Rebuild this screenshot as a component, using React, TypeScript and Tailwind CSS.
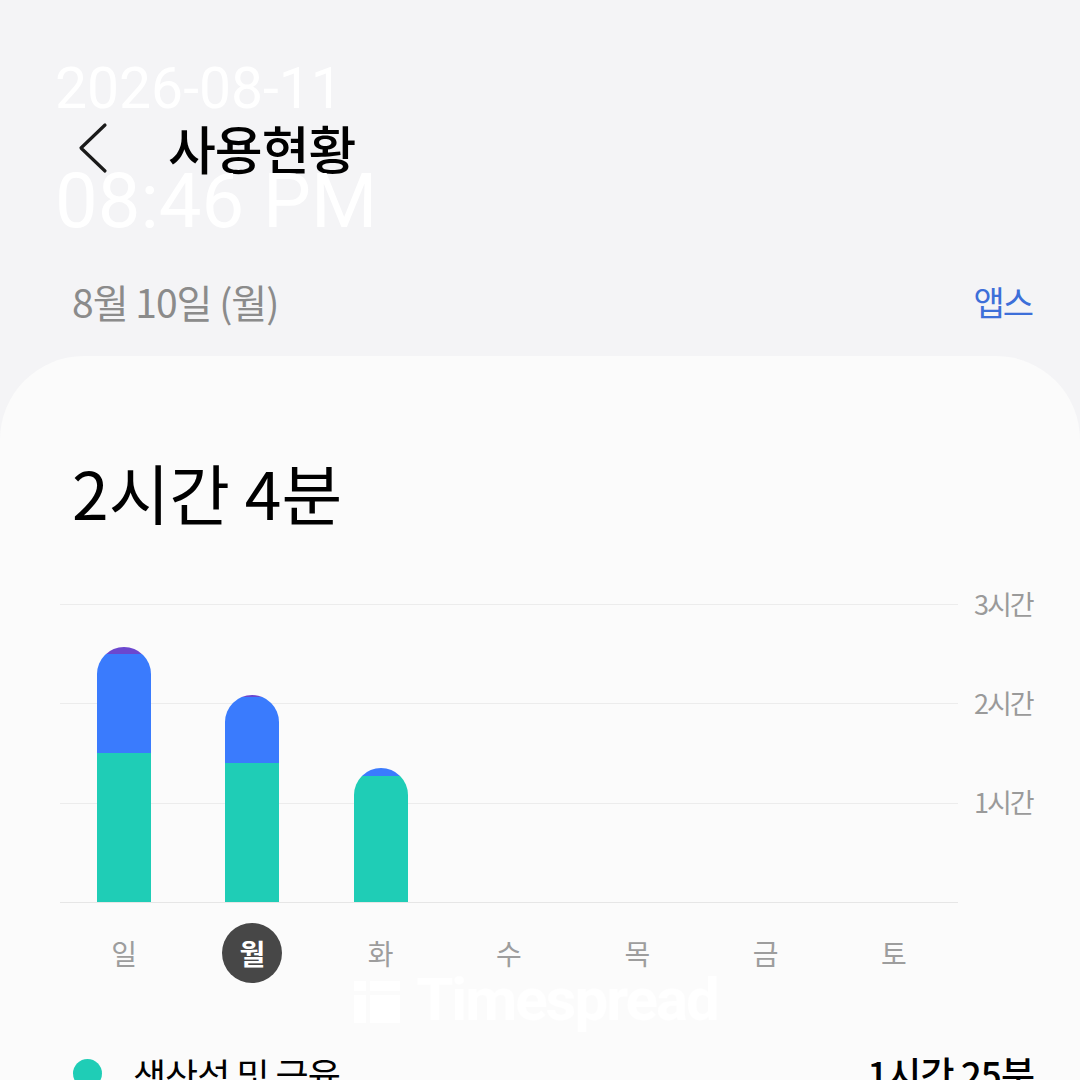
import React from 'react';

const days = ['일', '월', '화', '수', '목', '금', '토'];

// minutes per category for each day (teal, blue, purple)
const usage = [
  { teal: 90, blue: 60, purple: 4 },
  { teal: 84, blue: 40, purple: 1 },
  { teal: 76, blue: 5, purple: 0 },
  null,
  null,
  null,
  null,
];

const PX_PER_MIN = 298 / 180;

const Bar = ({ d }: { d: { teal: number; blue: number; purple: number } }) => (
  <div className="w-[54px] flex flex-col rounded-t-[27px] overflow-hidden">
    <div className="bg-[#6b47cf]" style={{ height: d.purple * PX_PER_MIN }} />
    <div className="bg-[#3a7bfd]" style={{ height: d.blue * PX_PER_MIN }} />
    <div className="bg-[#1fcdb6]" style={{ height: d.teal * PX_PER_MIN }} />
  </div>
);

export default function App() {
  return (
    <div
      className="relative w-[1080px] h-[1080px] overflow-hidden bg-[#f4f4f6] text-black"
      style={{ fontFamily: '"Noto Sans", "Noto Sans CJK KR", sans-serif' }}
    >
      {/* Header */}
      <div className="flex items-center h-[70px] mt-[113px] pl-[78px]">
        <svg width="30" height="52" viewBox="0 0 30 52" fill="none" stroke="#1a1a1a" strokeWidth={3.2} strokeLinecap="round" strokeLinejoin="round">
          <path d="M27 3 L3 26 L27 49" />
        </svg>
        <div className="ml-[60px] text-[52px] font-medium tracking-[-1px] leading-none" style={{ fontFamily: '"Noto Sans CJK KR", sans-serif' }}>
          사용현황
        </div>
      </div>

      {/* Date row */}
      <div className="flex items-center justify-between mt-[95px] pl-[72px] pr-[48px] h-[46px]">
        <span className="text-[39px] text-[#8b8b8b] tracking-[-1px]" style={{ fontFamily: '"Noto Sans CJK KR", sans-serif' }}>
          8월 10일 (월)
        </span>
        <span className="text-[34px] text-[#3d6fd9] tracking-[-2px]" style={{ fontFamily: '"Noto Sans CJK KR", sans-serif' }}>
          앱스
        </span>
      </div>

      {/* Card */}
      <div className="mt-[32px] bg-[#fbfbfb] rounded-t-[84px] h-[800px] pt-[102px]">
        <div className="pl-[72px] text-[66px] leading-none" style={{ fontFamily: '"Noto Sans CJK KR", sans-serif' }}>
          2시간 4분
        </div>

        {/* Chart */}
        <div className="flex mt-[80px] pl-[60px]">
          <div className="relative w-[898px] h-[299px]">
            <div className="absolute inset-0 flex flex-col justify-between">
              <div className="h-px bg-[#ececec]" />
              <div className="h-px bg-[#ececec]" />
              <div className="h-px bg-[#ececec]" />
              <div className="h-px bg-[#e6e6e6]" />
            </div>
            <div className="absolute inset-0 grid grid-cols-7 items-end pb-px">
              {usage.map((d, i) => (
                <div key={i} className="flex justify-center">
                  {d && <Bar d={d} />}
                </div>
              ))}
            </div>
          </div>
          <div className="ml-[16px] flex flex-col justify-between h-[230px] -mt-[16px] text-[27px] text-[#9a9a9a] tracking-[-2px] leading-[32px]" style={{ fontFamily: '"Noto Sans CJK KR", sans-serif' }}>
            <span>3시간</span>
            <span>2시간</span>
            <span>1시간</span>
          </div>
        </div>

        {/* Day labels */}
        <div className="grid grid-cols-7 w-[898px] ml-[60px] mt-[20px] h-[60px] items-center" style={{ fontFamily: '"Noto Sans CJK KR", sans-serif' }}>
          {days.map((d, i) => (
            <div key={d} className="flex justify-center">
              {i === 1 ? (
                <div className="w-[60px] h-[60px] rounded-full bg-[#474747] flex items-center justify-center text-white text-[28px] font-semibold">
                  {d}
                </div>
              ) : (
                <span className="text-[28px] text-[#9d9d9d]">{d}</span>
              )}
            </div>
          ))}
        </div>

        {/* Watermark */}
        <div className="flex items-center justify-center gap-[16px] -mt-[10px] -ml-[8px] h-[54px] text-white/90">
          <svg width="46" height="46" viewBox="0 0 46 46" fill="white">
            <rect x="0" y="4" width="12" height="10" />
            <rect x="16" y="4" width="30" height="10" />
            <rect x="0" y="18" width="12" height="28" />
            <rect x="16" y="18" width="30" height="28" />
          </svg>
          <span className="text-[60px] font-bold tracking-[-2px] leading-none" style={{ fontFamily: 'Roboto, sans-serif' }}>Timespread</span>
        </div>

        {/* Category row */}
        <div className="flex items-center justify-between mt-[19px] pl-[73px] pr-[46px]" style={{ fontFamily: '"Noto Sans CJK KR", sans-serif' }}>
          <div className="flex items-center">
            <div className="w-[29px] h-[29px] rounded-full bg-[#1fcdb6]" />
            <span className="ml-[31px] text-[36px] tracking-[-1px]">생산성 및 금융</span>
          </div>
          <span className="text-[37px] font-medium tracking-[-1px]">1시간 25분</span>
        </div>
      </div>

      {/* Timestamp overlay */}
      <div className="absolute left-[55px] top-[60px] text-white leading-none" style={{ fontFamily: 'Roboto, sans-serif' }}>
        <div className="text-[57px]">2026-08-11</div>
        <div className="text-[76px] mt-[46px]">08:46 PM</div>
      </div>
    </div>
  );
}
